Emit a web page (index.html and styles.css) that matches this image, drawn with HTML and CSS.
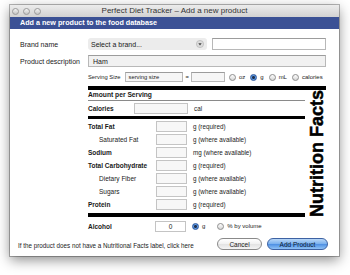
FILE: index.html
```html
<!DOCTYPE html>
<html lang="en">
<head>
    <meta charset="UTF-8">
    <title>Perfect Diet Tracker - Add a new product</title>
    <link rel="stylesheet" href="styles.css">
</head>
<body>
    <div class="window">
        <div class="titlebar">
            <div class="lights"><span></span><span></span><span></span></div>
            <div class="title">Perfect Diet Tracker – Add a new product</div>
            <div></div>
        </div>
        <div class="banner">Add a new product to the food database</div>

        <div class="content">
            <div class="field-row">
                <label class="label">Brand name</label>
                <div class="select">
                    <span>Select a brand...</span>
                    <svg class="select-arrow" width="8" height="8" viewBox="0 0 8 8">
                        <circle cx="4" cy="4" r="3.6" fill="#dcdcdc" stroke="#b0b0b0" stroke-width="0.6"/>
                        <path d="M2.3 3.3 L5.7 3.3 L4 5.6 Z" fill="#444"/>
                    </svg>
                </div>
                <div class="input brand-input"></div>
            </div>

            <div class="field-row">
                <label class="label">Product description</label>
                <div class="input desc-input">Ham</div>
            </div>

            <div class="serving-row">
                <span class="serving-label">Serving Size</span>
                <div class="input small serving-size">serving size</div>
                <span class="equals">=</span>
                <div class="input small serving-amount"></div>
                <div class="radios">
                    <span class="radio"></span><span class="radio-text">oz</span>
                    <span class="radio checked"></span><span class="radio-text">g</span>
                    <span class="radio"></span><span class="radio-text">mL</span>
                    <span class="radio"></span><span class="radio-text">calories</span>
                </div>
            </div>

            <div class="facts">
                <div class="bar-top"></div>
                <div class="facts-body">
                    <div class="amount">Amount per Serving</div>
                    <div class="rule-thin"></div>
                    <div class="cal-row">
                        <span class="n-label bold cal-label">Calories</span>
                        <div class="input n-box cal-box"></div>
                        <span class="unit">cal</span>
                    </div>
                    <div class="rule-mid"></div>
                    <div class="nutrients">
                        <div class="n-row">
                            <span class="n-label bold">Total Fat</span>
                            <div class="input n-box"></div>
                            <span class="unit">g (required)</span>
                        </div>
                        <div class="n-row">
                            <span class="n-label sub">Saturated Fat</span>
                            <div class="input n-box"></div>
                            <span class="unit">g (where available)</span>
                        </div>
                        <div class="n-row">
                            <span class="n-label bold">Sodium</span>
                            <div class="input n-box"></div>
                            <span class="unit">mg (where available)</span>
                        </div>
                        <div class="n-row">
                            <span class="n-label bold">Total Carbohydrate</span>
                            <div class="input n-box"></div>
                            <span class="unit">g (required)</span>
                        </div>
                        <div class="n-row">
                            <span class="n-label sub">Dietary Fiber</span>
                            <div class="input n-box"></div>
                            <span class="unit">g (where available)</span>
                        </div>
                        <div class="n-row">
                            <span class="n-label sub">Sugars</span>
                            <div class="input n-box"></div>
                            <span class="unit">g (where available)</span>
                        </div>
                        <div class="n-row">
                            <span class="n-label bold">Protein</span>
                            <div class="input n-box"></div>
                            <span class="unit">g (required)</span>
                        </div>
                    </div>
                    <div class="bar-bottom"></div>
                </div>
                <div class="facts-title">Nutrition Facts</div>

                <div class="alcohol-row">
                    <span class="n-label bold alc-label">Alcohol</span>
                    <div class="input n-box alc-box">0</div>
                    <span class="radio checked alc-radio"></span><span class="radio-text">g</span>
                    <span class="radio alc-radio2"></span><span class="radio-text">% by volume</span>
                </div>
            </div>
        </div>

        <div class="footer">
            <span class="footnote">If the product does not have a Nutritional Facts label, click here</span>
            <div class="buttons">
                <span class="btn cancel">Cancel</span>
                <span class="btn primary">Add Product</span>
            </div>
        </div>
    </div>
</body>
</html>
```

FILE: styles.css
```css
* { margin: 0; padding: 0; box-sizing: border-box; }

body {
    font-family: "Liberation Sans", Arial, sans-serif;
    background: #ffffff;
    color: #1a1a1a;
    width: 350px;
    height: 275px;
    overflow: hidden;
    white-space: nowrap;
}

.window {
    margin: 5px 0 0 10px;
    width: 329px;
    background: #fff;
    box-shadow: 0 0 0 1px rgba(0, 0, 0, 0.28), 0 4px 12px rgba(0, 0, 0, 0.45);
}

/* title bar */
.titlebar {
    height: 12px;
    display: grid;
    grid-template-columns: 1fr auto 1fr;
    align-items: center;
    background: linear-gradient(#ececec, #d2d2d2);
}

.lights {
    display: flex;
    gap: 4px;
    padding-left: 2px;
}

.lights span {
    width: 7px;
    height: 7px;
    border-radius: 50%;
    background: linear-gradient(#f4f4f4, #c4c4c4);
    border: 1px solid #9a9a9a;
}

.title {
    font-size: 8px;
    color: #333;
    line-height: 12px;
}

.banner {
    height: 12px;
    line-height: 12px;
    background: #3b5195;
    color: #fff;
    font-weight: 700;
    font-size: 7.2px;
    padding-left: 10px;
}

/* form */
.content {
    padding: 9px 13px 0 10px;
    display: flex;
    flex-direction: column;
}

.field-row {
    display: flex;
    align-items: center;
    height: 12px;
    margin-bottom: 5px;
}

.label {
    width: 68px;
    font-size: 7px;
}

.select {
    width: 119px;
    height: 12px;
    background: #ececec;
    border-radius: 3px;
    display: flex;
    align-items: center;
    justify-content: space-between;
    padding: 0 3px 0 3px;
    font-size: 7px;
}

.input {
    background: #fff;
    border: 1px solid #b8b8b8;
    border-top-color: #9c9c9c;
    font-size: 7px;
    display: flex;
    align-items: center;
}

.brand-input {
    margin-left: 5px;
    flex: 1;
    height: 12px;
}

.desc-input {
    flex: 1;
    height: 12px;
    background: #f1f1f1;
    padding-left: 4px;
}

.serving-row {
    margin-left: 68px;
    height: 10px;
    display: flex;
    align-items: center;
    font-size: 5.8px;
    margin-bottom: 4px;
}

.serving-label {
    margin-right: 4px;
    flex-shrink: 0;
}

.input.small {
    height: 10px;
    font-size: 5.8px;
    background: #f6f6f6;
    flex-shrink: 0;
}

.serving-size {
    width: 58px;
    padding-left: 3px;
}

.equals { margin: 0 2px 0 3px; }

.serving-amount { width: 34px; }

.radios {
    display: flex;
    align-items: center;
    margin-left: 4px;
}

.radio {
    width: 7px;
    height: 7px;
    border-radius: 50%;
    border: 1px solid #8e8e8e;
    background: linear-gradient(#fdfdfd, #d6d6d6);
    flex-shrink: 0;
}

.radio.checked {
    border-color: #2f5a9e;
    background: radial-gradient(circle at 50% 50%, #1d2f4f 0 1.3px, #6aa6ea 1.6px, #2f6cc4 100%);
}

.radio-text {
    font-size: 6px;
    margin: 0 5px 0 3px;
}

/* nutrition panel */
.facts {
    margin-left: 68px;
    display: grid;
    grid-template-columns: 1fr 18px;
    column-gap: 3px;
}

.bar-top {
    grid-column: 1 / -1;
    height: 4px;
    background: #000;
}

.amount {
    height: 10px;
    line-height: 10px;
    font-weight: 700;
    font-size: 6.7px;
}

.rule-thin {
    height: 1px;
    background: #8a8a8a;
}

.cal-row {
    height: 15px;
    display: flex;
    align-items: center;
}

.rule-mid {
    height: 3px;
    background: #000;
}

.nutrients {
    margin-top: 1px;
}

.n-row {
    height: 13px;
    display: flex;
    align-items: center;
}

.n-label {
    width: 68px;
    font-size: 6.5px;
}

.n-label.bold { font-weight: 700; }

.n-label.sub {
    padding-left: 11px;
}

.cal-label { width: 46px; }

.n-box {
    width: 31px;
    height: 11px;
    background: #f7f7f7;
    border-color: #c4c4c4;
}

.cal-box { width: 54px; }

.unit {
    font-size: 6.3px;
    margin-left: 6px;
}

.bar-bottom {
    margin-top: 2px;
    height: 4px;
    background: #000;
}

.facts-title {
    writing-mode: vertical-rl;
    transform: rotate(180deg);
    font-weight: 900;
    font-size: 18px;
    line-height: 18px;
    text-align: center;
    color: #000;
    -webkit-text-stroke: 0.5px #000;
}

.alcohol-row {
    grid-column: 1 / -1;
    margin-top: 3px;
    height: 12px;
    display: flex;
    align-items: center;
}

.alc-label { width: 67px; }

.alc-box {
    justify-content: center;
    font-size: 6.5px;
    background: #fff;
}

.alc-radio { margin-left: 6px; }

.alcohol-row .radio-text { margin-right: 12px; }

/* footer */
.footer {
    margin-top: 6px;
    padding: 0 11px 6px 8px;
    display: flex;
    align-items: flex-end;
    justify-content: space-between;
}

.footnote {
    font-size: 6.3px;
    line-height: 8px;
}

.buttons {
    display: flex;
    gap: 5px;
}

.btn {
    height: 12px;
    border-radius: 6px;
    font-size: 6.5px;
    display: flex;
    align-items: center;
    justify-content: center;
}

.cancel {
    width: 45px;
    border: 1px solid #8a8a8a;
    background: linear-gradient(#ffffff, #f0f0f0 50%, #e2e2e2 51%, #f4f4f4);
}

.primary {
    width: 61px;
    border: 1px solid #3d62a3;
    background: linear-gradient(#b9d7f7, #7bb1ee 48%, #4d8fe3 52%, #8fc2f6);
    color: #0e1b33;
}
```
